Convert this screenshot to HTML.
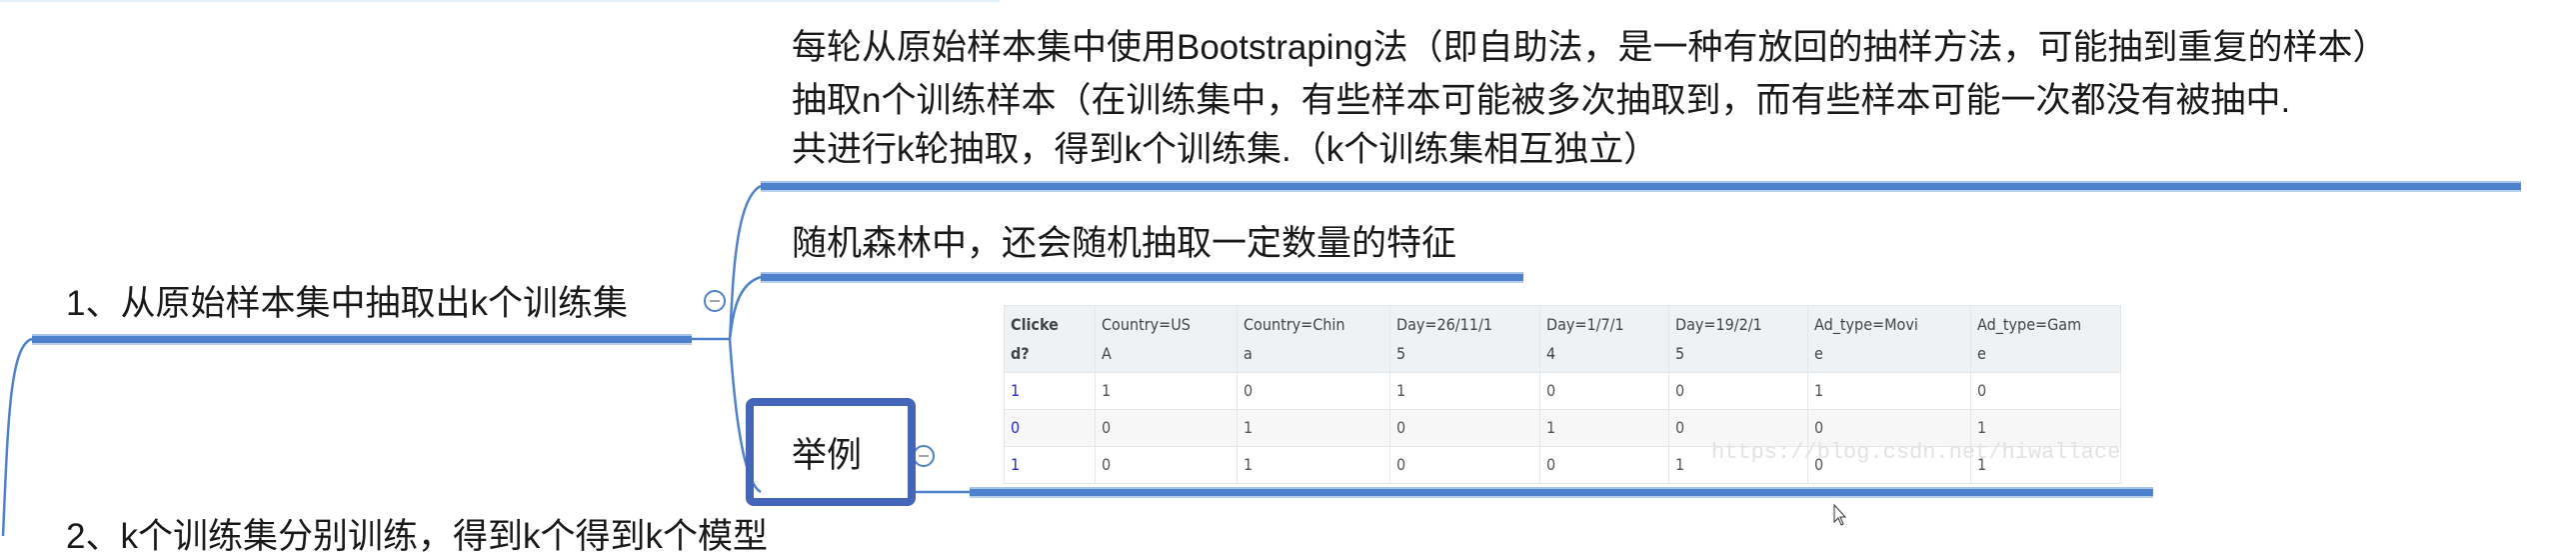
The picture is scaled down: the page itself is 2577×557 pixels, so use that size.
<!DOCTYPE html>
<html><head><meta charset="utf-8">
<style>
body{margin:0;width:2577px;height:536px;background:#fff;overflow:hidden;position:relative;font-family:"Liberation Sans","Noto Sans CJK SC",sans-serif;color:#1a1a1a}
.t{position:absolute;font-size:35px;line-height:40px;white-space:nowrap}
.ul{position:absolute;height:7px;background:#4f82cc;box-shadow:0 -2px 0 #a9c4ea,0 2px 0 #b9cfee}
table{position:absolute;left:1004px;top:305px;width:1118px;border-collapse:collapse;font-family:"DejaVu Sans Condensed","Liberation Sans Narrow","Liberation Sans",sans-serif;font-size:16px;color:#555}
td{border:1px solid #e4e6e8;vertical-align:top;padding:4px 6px;line-height:29px}
tr.h td{background:#eef2f4;color:#444;height:55px}
tr.r td{height:27px;padding-top:3px}
tr.r:nth-child(3) td{background:#f7f7f7}
td.c{color:#2a2acf}
tr.h td.c{font-weight:bold}
</style></head><body>
<div style="position:absolute;left:0;top:0;width:1000px;height:2px;background:#e3f1fa"></div>
<svg width="2577" height="536" style="position:absolute;left:0;top:0">
<g fill="none" stroke="#4f82cc" stroke-width="2.5">
<path d="M692 339 L730 339"/>
<path d="M730 339 C733 300,733 200,761 186"/>
<path d="M730 339 C733 320,735 285,761 277"/>
<path d="M730 339 C733 380,740 480,761 492"/>
<path d="M916 492 L970 492"/>
<path d="M32 339 C10 345,8 420,3 536"/>
</g>
<circle cx="715" cy="301" r="10" fill="#fff" stroke="#4f82cc" stroke-width="2"/>
<line x1="710" y1="301" x2="720" y2="301" stroke="#888" stroke-width="1.5"/>
<circle cx="924" cy="456" r="10" fill="#fff" stroke="#4f82cc" stroke-width="2"/>
<line x1="919" y1="456" x2="929" y2="456" stroke="#888" stroke-width="1.5"/>
<path d="M1835 505 L1835 522 L1839 518 L1842 525 L1844 524 L1841 517 L1846 517 Z" fill="#fff" stroke="#333" stroke-width="1"/>
</svg>
<div class="t" style="left:792px;top:28px">每轮从原始样本集中使用Bootstraping法（即自助法，是一种有放回的抽样方法，可能抽到重复的样本）</div>
<div class="t" style="left:792px;top:81px">抽取n个训练样本（在训练集中，有些样本可能被多次抽取到，而有些样本可能一次都没有被抽中.</div>
<div class="t" style="left:792px;top:130px">共进行k轮抽取，得到k个训练集.（k个训练集相互独立）</div>
<div class="ul" style="left:761px;top:183px;width:1761px"></div>
<div class="t" style="left:792px;top:224px">随机森林中，还会随机抽取一定数量的特征</div>
<div class="ul" style="left:761px;top:274px;width:763px"></div>
<div class="t" style="left:66px;top:284px">1、从原始样本集中抽取出k个训练集</div>
<div class="ul" style="left:32px;top:336px;width:660px"></div>
<div style="position:absolute;left:746px;top:398px;width:154px;height:92px;border:8px solid #4465b8;border-radius:8px"></div>
<div class="t" style="left:792px;top:436px">举例</div>
<div class="ul" style="left:970px;top:489px;width:1184px"></div>
<table>
<tr class="h"><td class="c" style="width:78px">Clicke<br>d?</td><td style="width:129px">Country=US<br>A</td><td style="width:140px">Country=Chin<br>a</td><td style="width:137px">Day=26/11/1<br>5</td><td style="width:116px">Day=1/7/1<br>4</td><td style="width:126px">Day=19/2/1<br>5</td><td style="width:150px">Ad_type=Movi<br>e</td><td>Ad_type=Gam<br>e</td></tr>
<tr class="r"><td class="c">1</td><td>1</td><td>0</td><td>1</td><td>0</td><td>0</td><td>1</td><td>0</td></tr>
<tr class="r"><td class="c">0</td><td>0</td><td>1</td><td>0</td><td>1</td><td>0</td><td>0</td><td>1</td></tr>
<tr class="r"><td class="c">1</td><td>0</td><td>1</td><td>0</td><td>0</td><td>1</td><td>0</td><td>1</td></tr>
</table>
<div style="position:absolute;left:1712px;top:440px;font-family:'Liberation Mono',monospace;font-size:22px;color:#e2e2e2">https://blog.csdn.net/hiwallace</div>
<div class="t" style="left:66px;top:517px">2、k个训练集分别训练，得到k个得到k个模型</div>
</body></html>
